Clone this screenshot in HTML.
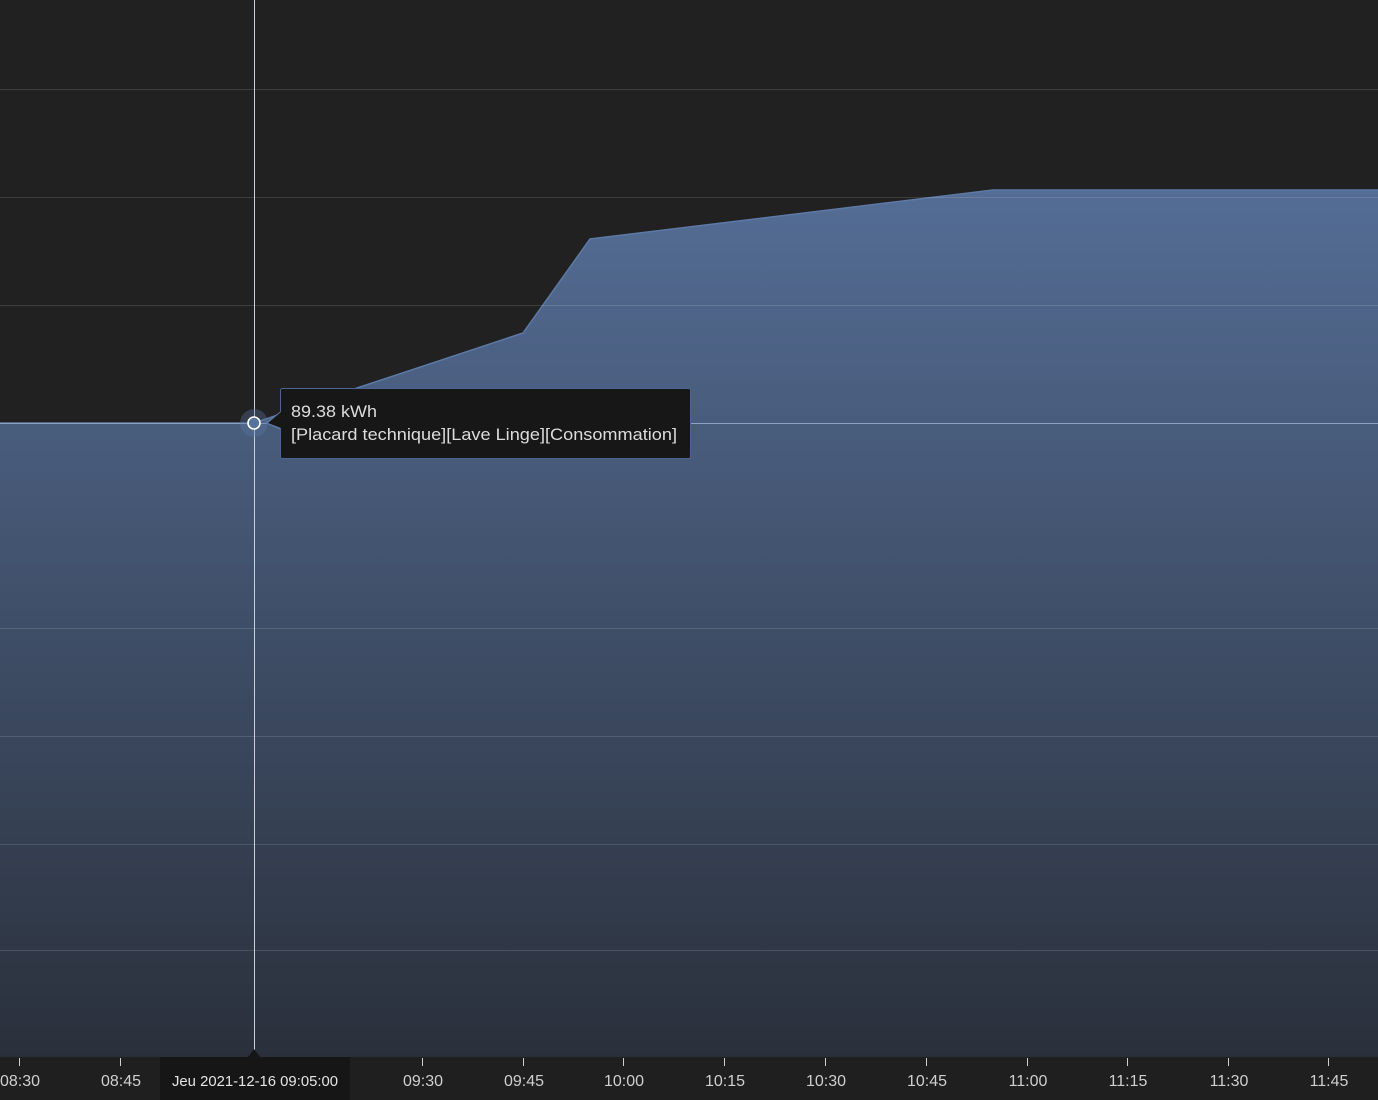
<!DOCTYPE html>
<html><head><meta charset="utf-8"><style>
html,body{margin:0;padding:0;background:#212121;width:1378px;height:1100px;overflow:hidden}
svg{display:block}
text{font-family:"Liberation Sans",sans-serif}
</style></head><body>
<svg width="1378" height="1100" viewBox="0 0 1378 1100" xmlns="http://www.w3.org/2000/svg">
<defs>
<linearGradient id="g" x1="0" y1="190" x2="0" y2="1057" gradientUnits="userSpaceOnUse">
<stop offset="0" stop-color="#546d95"/>
<stop offset="1" stop-color="#2a303b"/>
</linearGradient>
</defs>
<rect width="1378" height="1100" fill="#212121"/>
<polygon points="0,423 254,423 360,387 523,333 590,239 993,190 1378,190 1378,1057 0,1057" fill="url(#g)"/>
<polyline points="0,423 254,423 360,387 523,333 590,239 993,190 1378,190" fill="none" stroke="#5d79a6" stroke-width="1.5"/>
<g stroke="#ffffff" stroke-opacity="0.13" stroke-width="1">
<line x1="0" y1="89.5" x2="1378" y2="89.5"/>
<line x1="0" y1="197.5" x2="1378" y2="197.5"/>
<line x1="0" y1="305.5" x2="1378" y2="305.5"/>
<line x1="0" y1="628.5" x2="1378" y2="628.5"/>
<line x1="0" y1="736.5" x2="1378" y2="736.5"/>
<line x1="0" y1="844.5" x2="1378" y2="844.5"/>
<line x1="0" y1="950.5" x2="1378" y2="950.5"/>
</g>
<line x1="0" y1="423.5" x2="1378" y2="423.5" stroke="#8ea3c4" stroke-width="1"/>
<line x1="254.5" y1="0" x2="254.5" y2="1050" stroke="#c8d0dc" stroke-width="1"/>
<rect x="0" y="1057" width="1378" height="43" fill="#1f1f1f"/>
<g stroke="#cfcfcf" stroke-width="1">
<line x1="19.5" y1="1058" x2="19.5" y2="1066"/>
<line x1="120.5" y1="1058" x2="120.5" y2="1066"/>
<line x1="422.5" y1="1058" x2="422.5" y2="1066"/>
<line x1="523.5" y1="1058" x2="523.5" y2="1066"/>
<line x1="623.5" y1="1058" x2="623.5" y2="1066"/>
<line x1="724.5" y1="1058" x2="724.5" y2="1066"/>
<line x1="825.5" y1="1058" x2="825.5" y2="1066"/>
<line x1="926.5" y1="1058" x2="926.5" y2="1066"/>
<line x1="1027.5" y1="1058" x2="1027.5" y2="1066"/>
<line x1="1127.5" y1="1058" x2="1127.5" y2="1066"/>
<line x1="1228.5" y1="1058" x2="1228.5" y2="1066"/>
<line x1="1328.5" y1="1058" x2="1328.5" y2="1066"/>
</g>
<g fill="#cfcfcf" font-size="16" text-anchor="middle">
<text x="20" y="1086">08:30</text>
<text x="121" y="1086">08:45</text>
<text x="423" y="1086">09:30</text>
<text x="524" y="1086">09:45</text>
<text x="624" y="1086">10:00</text>
<text x="725" y="1086">10:15</text>
<text x="826" y="1086">10:30</text>
<text x="927" y="1086">10:45</text>
<text x="1028" y="1086">11:00</text>
<text x="1128" y="1086">11:15</text>
<text x="1229" y="1086">11:30</text>
<text x="1329" y="1086">11:45</text>
</g>
<rect x="160" y="1057" width="190" height="43" fill="#161616"/>
<polygon points="248,1057 254,1049 260,1057" fill="#161616"/>
<text x="172" y="1086" fill="#e6e6e6" font-size="14.5" textLength="166" lengthAdjust="spacingAndGlyphs">Jeu 2021-12-16 09:05:00</text>
<circle cx="254" cy="423" r="14" fill="#5d79a6" fill-opacity="0.35"/>
<circle cx="254" cy="423" r="6" fill="#56729f" stroke="#ffffff" stroke-width="1.6"/>
<polygon points="281,411 265,423 281,430" fill="#5d79a6"/>
<rect x="280.5" y="388.5" width="410" height="70" rx="2" fill="#171717" stroke="#4b6592" stroke-width="1"/>
<polygon points="281,412 268,423 281,428" fill="#171717"/>
<text x="291" y="417" fill="#dcdcdc" font-size="17" textLength="86" lengthAdjust="spacingAndGlyphs">89.38 kWh</text>
<text x="291" y="440" fill="#dcdcdc" font-size="17" textLength="386" lengthAdjust="spacingAndGlyphs">[Placard technique][Lave Linge][Consommation]</text>
</svg>
</body></html>
